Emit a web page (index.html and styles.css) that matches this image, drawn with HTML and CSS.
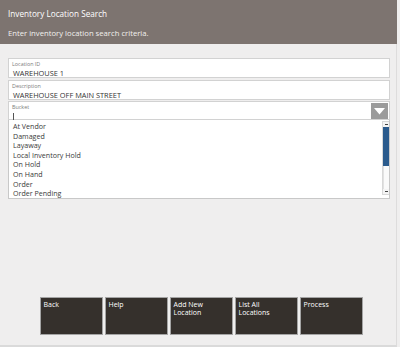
FILE: index.html
```html
<!DOCTYPE html>
<html>
<head>
<meta charset="utf-8">
<link rel="stylesheet" href="styles.css">
</head>
<body>
<div class="app">
  <header class="header">
    <div class="title">Inventory Location Search</div>
    <div class="subtitle">Enter inventory location search criteria.</div>
  </header>
  <main class="main">
    <div class="field f-first">
      <div class="label">Location ID</div>
      <div class="value">WAREHOUSE 1</div>
    </div>
    <div class="field">
      <div class="label">Description</div>
      <div class="value">WAREHOUSE OFF MAIN STREET</div>
    </div>
    <div class="field bucket">
      <div class="bucket-text">
        <div class="label">Bucket</div>
        <div class="caret"></div>
      </div>
      <div class="dd-btn">
        <svg width="11" height="7" viewBox="0 0 11 7"><polygon points="0,0 11,0 5.5,6.5" fill="#ffffff"/></svg>
      </div>
    </div>
    <div class="list">
      <ul class="items">
        <li>At Vendor</li>
        <li>Damaged</li>
        <li>Layaway</li>
        <li>Local Inventory Hold</li>
        <li>On Hold</li>
        <li>On Hand</li>
        <li>Order</li>
        <li>Order Pending</li>
      </ul>
      <div class="scrollbar">
        <div class="sb-arrow"><span></span></div>
        <div class="sb-thumb"></div>
        <div class="sb-track"></div>
        <div class="sb-arrow"><span></span></div>
      </div>
    </div>
    <div class="spacer"></div>
    <div class="buttons">
      <div class="btn">Back</div>
      <div class="btn">Help</div>
      <div class="btn">Add New<br>Location</div>
      <div class="btn">List All<br>Locations</div>
      <div class="btn">Process</div>
    </div>
  </main>
</div>
</body>
</html>
```
FILE: styles.css
```css
* { box-sizing: border-box; }
html, body { margin: 0; padding: 0; }
body {
  width: 400px;
  height: 347px;
  overflow: hidden;
  font-family: "Open Sans", "Noto Sans", sans-serif;
  background: #efeeee;
}
.app {
  width: 397px;
  height: 347px;
  display: flex;
  flex-direction: column;
  border-right: 1px solid #dddcdc;
  border-bottom: 2px solid #dadada;
}
.header {
  height: 44px;
  margin-right: -1px;
  background: #7d7470;
  padding: 8px 0 0 8px;
  color: #ffffff;
}
.title {
  font-size: 8.2px;
  line-height: 12px;
}
.subtitle {
  font-size: 7.7px;
  line-height: 12px;
  margin-top: 7px;
  color: #f2f0ee;
}
.main {
  flex: 1;
  display: flex;
  flex-direction: column;
  padding: 0 0 0 8px;
}
.field {
  width: 382px;
  height: 20px;
  background: #ffffff;
  border: 1px solid #d2d2d2;
  margin-top: 2px;
  padding: 2px 0 0 3px;
}
.f-first { margin-top: 14px; }
.label {
  font-size: 5.4px;
  line-height: 7px;
  color: #7a7a7a;
}
.value {
  font-size: 7.4px;
  line-height: 10px;
  color: #333333;
  padding-left: 1px;
}
.bucket {
  margin-top: 1px;
  height: 19px;
  display: flex;
  justify-content: space-between;
  padding-right: 1px;
}
.caret {
  width: 1px;
  height: 8px;
  margin-top: 2px;
  margin-left: 1px;
  background: #555555;
}
.dd-btn {
  width: 17px;
  height: 16px;
  background: #9b9b9b;
  display: flex;
  align-items: center;
  justify-content: center;
  margin-top: -1px;
}
.list {
  width: 382.5px;
  height: 79px;
  margin-left: -0.5px;
  background: #ffffff;
  border: 1px solid #c8c8c8;
  border-top: none;
  display: flex;
  justify-content: space-between;
  padding: 1px 0 1px 0;
}
.items {
  list-style: none;
  margin: 0;
  padding: 1px 0 0 4.5px;
}
.items li {
  font-size: 7.1px;
  line-height: 9.6px;
  height: 9.6px;
  color: #3a3a3a;
}
.scrollbar {
  width: 7px;
  display: flex;
  flex-direction: column;
  border: 1px solid #d8d8d8;
  border-right: none;
  margin-bottom: 2px;
}
.sb-arrow {
  height: 5px;
  display: flex;
  align-items: center;
  justify-content: center;
  background: #f4f4f4;
}
.sb-arrow span {
  width: 3px;
  height: 1px;
  background: #444444;
}
.sb-thumb {
  height: 39px;
  background: #2b5b8d;
}
.sb-track {
  flex: 1;
  background: #fafafa;
  border-left: 1px solid #e2e2e2;
}
.spacer { flex: 1; }
.buttons {
  display: flex;
  gap: 2.5px;
  padding-left: 32px;
  margin-bottom: 10px;
}
.btn {
  width: 62.5px;
  height: 38px;
  background: #35302c;
  border: 1px solid #a4a4a4;
  color: #ffffff;
  font-size: 7px;
  line-height: 7.6px;
  padding: 3px 0 0 2.5px;
}
```
